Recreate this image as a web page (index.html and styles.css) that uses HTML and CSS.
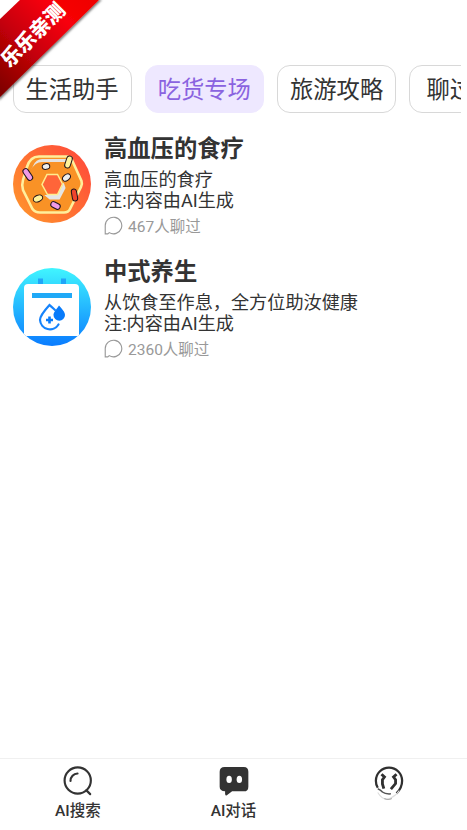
FILE: index.html
```
<!DOCTYPE html>
<html lang="zh-CN">
<head>
<meta charset="utf-8">
<title>AI对话</title>
<link rel="stylesheet" href="styles.css">
</head>
<body>
<div class="app">
  <nav class="tabs">
    <span class="tab">生活助手</span>
    <span class="tab active">吃货专场</span>
    <span class="tab">旅游攻略</span>
    <span class="tab wide">聊过的</span>
  </nav>
  <main class="list">
    <article class="item">
      <svg class="avatar" viewBox="0 0 78 78">
        <defs><linearGradient id="g1" x1="0" y1="1" x2="1" y2="0.2"><stop offset="0" stop-color="#ff9a2b"/><stop offset="1" stop-color="#ff4b3a"/></linearGradient>
        <linearGradient id="g2" x1="0" y1="0" x2="0" y2="1"><stop offset="0" stop-color="#40f5ff"/><stop offset="1" stop-color="#0a7cff"/></linearGradient>
        <clipPath id="disc"><circle cx="39" cy="39" r="39"/></clipPath></defs>
        <circle cx="39" cy="39" r="39" fill="url(#g1)"/>
        <path d="M26 11.500H53Q57 11.500 59 15L68.500 36Q69.500 39 68 42L57 64Q55.500 67.500 51 67.500H27Q22 67.500 19.500 64L10 45Q8.500 40 10 35L14 22Q17 11.500 26 11.500Z" fill="#f99226" stroke="#ffef9c" stroke-width="2.600"/>
        <path d="M20 21Q23 14 29 14H54L56 17H29Q22 17 18 25Z" fill="#e6e3e0"/>
        <path d="M34 51H45L50.500 40L51.500 43L46 53.500H37Z" fill="#e5e5e5" stroke="#e5e5e5" stroke-width="2"/>
        <path d="M34 29.500H44.500L49.500 39L44.500 49.500H34.500L29 39.500Z" fill="#ff6539" stroke="#ffed8e" stroke-width="1.500"/>
        <g stroke="#20151b" stroke-width="1">
          <rect x="-2.800" y="-6.200" width="5.600" height="12.400" rx="2.800" fill="#fff39b" transform="translate(55.500 17) rotate(18)"/>
          <rect x="-2.800" y="-6.500" width="5.600" height="13" rx="2.800" fill="#ef9ae6" transform="translate(14.800 29.500) rotate(-34)"/>
          <rect x="-2.800" y="-5" width="5.600" height="10" rx="2.800" fill="#ef9ae6" transform="translate(42.500 60.500) rotate(-62)"/>
          <rect x="-2.600" y="-6" width="5.200" height="12" rx="2.600" fill="#f0442d" transform="translate(61.500 50) rotate(-10)"/>
          <ellipse cx="33" cy="21.500" rx="3.800" ry="2.900" fill="#eee" transform="rotate(-10 33 21.500)"/>
          <ellipse cx="53.500" cy="32.500" rx="4.400" ry="3" fill="#eee" transform="rotate(-38 53.500 32.500)"/>
          <ellipse cx="25" cy="53.500" rx="4.900" ry="3.200" fill="#fff39b" transform="rotate(-22 25 53.500)"/>
        </g>
      </svg>
      <div class="info">
        <h2>高血压的食疗</h2>
        <p>高血压的食疗<br>注:内容由AI生成</p>
        <div class="meta"><svg viewBox="0 0 20 20"><path d="M1.300 18.800V10A8.700 8.700 0 1 1 5.500 17.500L4 18.800Z"/></svg><span>467人聊过</span></div>
      </div>
    </article>
    <article class="item">
      <svg class="avatar" viewBox="0 0 78 78">
        <circle cx="39" cy="39" r="39" fill="url(#g2)"/>
        <path d="M25 10.500H30V16H25ZM48 10.500H53V16H48Z" fill="#20a5f8"/>
        <path d="M15 16H62Q66 16 66 20V68H11V20Q11 16 15 16Z" fill="#fff" clip-path="url(#disc)"/>
        <path d="M19 25H59V30H19Z" fill="#20a9f7"/>
        <path d="M42 42C40 40 38 38.500 36.500 37C31 43 27 48 27 52A10 10 0 0 0 45.500 56.500" fill="none" stroke="#1683fb" stroke-width="2.200" stroke-linecap="round"/>
        <path d="M46 37.500C42 43 40.500 45 40.500 47A5.700 5.700 0 0 0 52 47C52 44 49 41 46 37.500Z" fill="#087bfa"/>
        <path d="M36.500 48.500V55.500M33 52H40" stroke="#087bfa" stroke-width="2.600"/>
      </svg>
      <div class="info">
        <h2>中式养生</h2>
        <p>从饮食至作息，全方位助汝健康<br>注:内容由AI生成</p>
        <div class="meta"><svg viewBox="0 0 20 20"><path d="M1.300 18.800V10A8.700 8.700 0 1 1 5.500 17.500L4 18.800Z"/></svg><span>2360人聊过</span></div>
      </div>
    </article>
  </main>
  <footer class="bottom">
    <div class="entry">
      <svg viewBox="0 0 32 32" fill="none" stroke="#333" stroke-width="2.300" stroke-linecap="round"><circle cx="15.700" cy="15.500" r="14"/><path d="M8 16A8 8 0 0 1 15.500 8M25 26L29 30"/></svg>
      <span>AI搜索</span>
    </div>
    <div class="entry">
      <svg viewBox="0 0 32 32"><path d="M6 1H26.500Q31.300 1 31.300 6V22Q31.300 27 26.500 27H14L8 31.500Q6.500 31.500 6.500 29.500V27Q.7 26.500 .7 22V6Q.7 1 6 1Z" fill="#333"/><ellipse cx="10.800" cy="14.300" rx="2.900" ry="3.800" fill="#fff"/><ellipse cx="21.700" cy="14.300" rx="2.900" ry="3.800" fill="#fff"/></svg>
      <span>AI对话</span>
    </div>
    <div class="entry profile">
      <svg viewBox="0 0 32 38" fill="none" stroke="#303030" stroke-width="2.400">
        <path d="M4 23A14 14 0 0 1 2 15.500A14 14 0 0 1 30 15.500C30 22 28 25 24 29"/>
        <path d="M8 8.500L11.200 11.500L9 14.500V19L10.500 24M24 8.500L20.800 11.500L23 14.500V18.500L18 24.500" stroke-width="3"/>
        <path d="M4 24Q7 25 9 27.500Q12 30 18 29.500" stroke-width="1.600" stroke="#555"/>
        <path d="M4 28Q10 38 18 34Q24 31 27 26" stroke="#ddd" stroke-width="1.200"/>
        <path d="M11 34.500Q15 36.500 19 34.500" stroke="#aaa" stroke-width="1.200"/>
      </svg>
    </div>
  </footer>
  <div class="ribbon">
    <svg viewBox="0 0 104 104">
      <defs><linearGradient id="rb" x1="0" y1="90" x2="90" y2="0" gradientUnits="userSpaceOnUse"><stop offset="0" stop-color="#800000"/><stop offset=".4" stop-color="#c60508"/><stop offset=".75" stop-color="#f80508"/><stop offset="1" stop-color="#f00000"/></linearGradient>
      <filter id="sh" x="-10%" y="-10%" width="125%" height="125%"><feDropShadow dx="1" dy="1.500" stdDeviation="1.200" flood-color="#000" flood-opacity=".55"/></filter></defs>
      <path d="M22 -2H101L-2 99V21Z" fill="url(#rb)" filter="url(#sh)"/>
    </svg>
    <span>乐乐亲测</span>
  </div>
</div>
</body>
</html>
```
FILE: styles.css
```
* { box-sizing: border-box; }
body {
  margin: 0;
  background: #fff;
  color: #333;
  font-family: Roboto, "Noto Sans CJK SC", sans-serif;
}
.app {
  position: relative;
  height: 830px;
  display: flex;
  flex-direction: column;
  overflow: hidden;
}
.tabs {
  display: flex;
  gap: 13.3px;
  margin: 65px 6px 0 0;
  padding-left: 12.5px;
  overflow: hidden;
}
.tab {
  flex: 0 0 119px;
  height: 48px;
  border: 1.3px solid #d8d8d8;
  border-radius: 13px;
  font-size: 23.3px;
  line-height: 48px;
  text-align: center;
  white-space: nowrap;
}
.tab.active {
  background: #eee8ff;
  border-color: #eee8ff;
  color: #8a63e0;
}
.tab.wide { flex-basis: 104px; }
.list { flex: 1; padding: 21px 13px 0; }
.item { display: flex; height: 123px; }
.avatar { width: 78px; height: 78px; margin: 11px 13px 0 0; flex: none; }
.info { flex: 1; }
h2 {
  margin: 1px 0 0;
  font-size: 23.3px;
  font-weight: 700;
  line-height: 28px;
}
p {
  margin: 6px 0 0;
  font-size: 18.15px;
  line-height: 21px;
}
.meta {
  display: flex;
  align-items: center;
  gap: 5px;
  margin-top: 4px;
  height: 20px;
  font-size: 15.5px;
  color: #999;
}
.meta svg { width: 19px; height: 19px; fill: none; stroke: #999; stroke-width: 1.2; }
.bottom {
  display: flex;
  height: 72px;
  border-top: 1px solid #f0f0f0;
}
.entry {
  flex: 1;
  display: flex;
  flex-direction: column;
  align-items: center;
  padding-top: 7px;
  font-size: 15.5px;
  font-weight: 500;
  line-height: 24px;
}
.entry svg { width: 30px; height: 30px; }
.entry span { margin-top: 3px; }
.profile svg { height: 36px; }
.ribbon {
  position: absolute;
  left: 0;
  top: 0;
  width: 104px;
  height: 104px;
}
.ribbon svg { display: block; width: 104px; height: 104px; }
.ribbon span {
  position: absolute;
  left: -12px;
  top: 22px;
  width: 90px;
  line-height: 26px;
  font-size: 20.2px;
  font-weight: 900;
  color: #fff;
  text-align: center;
  transform: rotate(-45deg);
}
```
